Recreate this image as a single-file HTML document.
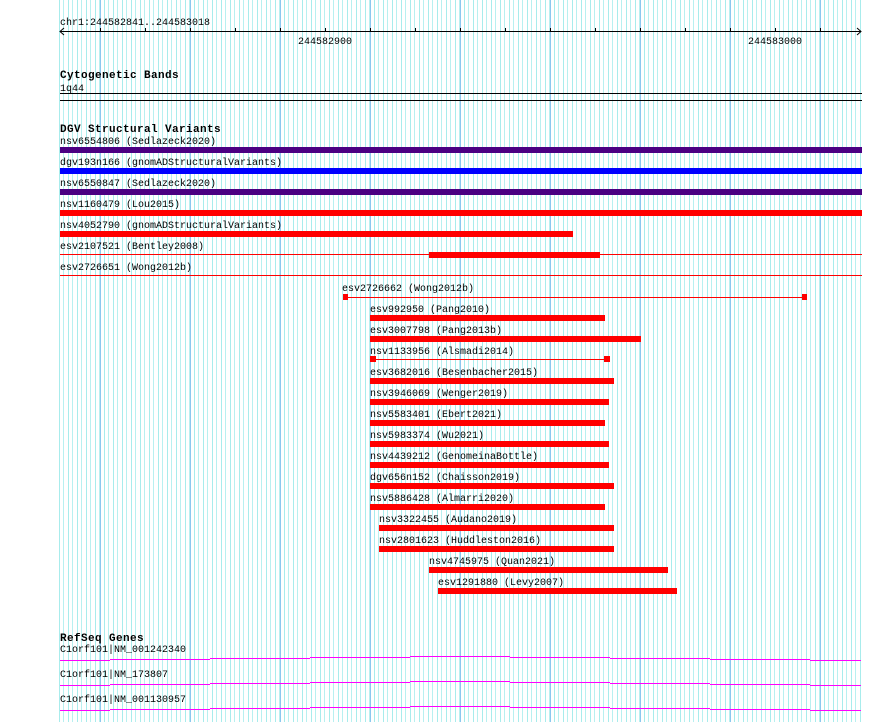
<!DOCTYPE html>
<html><head><meta charset="utf-8"><style>
html,body{margin:0;padding:0;background:#fff;width:890px;height:722px;overflow:hidden}
svg{display:block}
text{font-family:"Liberation Mono","DejaVu Sans Mono",monospace;font-size:10px;fill:#000}
.b{font-weight:bold;font-size:11px;letter-spacing:0.4px}
</style></head><body>
<svg width="890" height="722" viewBox="0 0 890 722" shape-rendering="crispEdges">
<defs>
<pattern id="lt" x="59" y="0" width="9" height="722" patternUnits="userSpaceOnUse">
<rect x="0" y="0" width="1" height="722" fill="#a8ecec"/>
<rect x="4" y="0" width="1" height="722" fill="#b8f0f0"/>
</pattern>
<pattern id="dk" x="100" y="0" width="90" height="722" patternUnits="userSpaceOnUse">
<rect x="0" y="0" width="1" height="722" fill="#8cc8ee"/>
</pattern>
</defs>
<rect x="59" y="0" width="802" height="722" fill="url(#lt)"/>
<rect x="100" y="0" width="761" height="722" fill="url(#dk)"/>

<!-- ruler -->
<text x="60" y="25">chr1:244582841..244583018</text>
<rect x="60" y="31" width="801" height="1" fill="#000"/>
<path d="M64 28 L60 31.5 L64 35 M857 28 L861 31.5 L857 35" stroke="#000" fill="none" shape-rendering="auto"/>
<g fill="#000">
<rect x="100" y="28" width="1" height="4"/><rect x="145" y="28" width="1" height="4"/><rect x="190" y="28" width="1" height="4"/><rect x="235" y="28" width="1" height="4"/><rect x="280" y="28" width="1" height="4"/><rect x="325" y="28" width="1" height="4"/><rect x="370" y="28" width="1" height="4"/><rect x="415" y="28" width="1" height="4"/><rect x="460" y="28" width="1" height="4"/><rect x="505" y="28" width="1" height="4"/><rect x="550" y="28" width="1" height="4"/><rect x="595" y="28" width="1" height="4"/><rect x="640" y="28" width="1" height="4"/><rect x="685" y="28" width="1" height="4"/><rect x="730" y="28" width="1" height="4"/><rect x="775" y="28" width="1" height="4"/><rect x="820" y="28" width="1" height="4"/>
</g>
<text x="298" y="44">244582900</text>
<text x="748" y="44">244583000</text>

<text class="b" x="60" y="78">Cytogenetic Bands</text>
<text x="60" y="91">1q44</text>
<rect x="60" y="93" width="802" height="1" fill="#000"/>
<rect x="60" y="100" width="802" height="1" fill="#000"/>

<text class="b" x="60" y="132">DGV Structural Variants</text>
<text x="60" y="144">nsv6554806 (Sedlazeck2020)</text>
<rect x="60" y="147" width="802" height="6" fill="#4b0082"/>
<text x="60" y="165">dgv193n166 (gnomADStructuralVariants)</text>
<rect x="60" y="168" width="802" height="6" fill="#0000ff"/>
<text x="60" y="186">nsv6550847 (Sedlazeck2020)</text>
<rect x="60" y="189" width="802" height="6" fill="#4b0082"/>
<text x="60" y="207">nsv1160479 (Lou2015)</text>
<rect x="60" y="210" width="802" height="6" fill="#ff0000"/>
<text x="60" y="228">nsv4052790 (gnomADStructuralVariants)</text>
<rect x="60" y="231" width="513" height="6" fill="#ff0000"/>
<text x="60" y="249">esv2107521 (Bentley2008)</text>
<rect x="60" y="254" width="802" height="1" fill="#ff0000"/>
<rect x="429" y="252" width="171" height="6" fill="#ff0000"/>
<text x="60" y="270">esv2726651 (Wong2012b)</text>
<rect x="60" y="275" width="802" height="1" fill="#ff0000"/>

<text x="342" y="291">esv2726662 (Wong2012b)</text>
<rect x="345" y="297" width="460" height="1" fill="#ff0000"/>
<rect x="343" y="294" width="5" height="6" fill="#ff0000"/>
<rect x="802" y="294" width="5" height="6" fill="#ff0000"/>

<text x="370" y="312">esv992950 (Pang2010)</text>
<rect x="370" y="315" width="235" height="6" fill="#ff0000"/>
<text x="370" y="333">esv3007798 (Pang2013b)</text>
<rect x="370" y="336" width="271" height="6" fill="#ff0000"/>
<text x="370" y="354">nsv1133956 (Alsmadi2014)</text>
<rect x="372" y="359" width="235" height="1" fill="#ff0000"/>
<rect x="370" y="356" width="6" height="6" fill="#ff0000"/>
<rect x="604" y="356" width="6" height="6" fill="#ff0000"/>
<text x="370" y="375">esv3682016 (Besenbacher2015)</text>
<rect x="370" y="378" width="244" height="6" fill="#ff0000"/>
<text x="370" y="396">nsv3946069 (Wenger2019)</text>
<rect x="370" y="399" width="239" height="6" fill="#ff0000"/>
<text x="370" y="417">nsv5583401 (Ebert2021)</text>
<rect x="370" y="420" width="235" height="6" fill="#ff0000"/>
<text x="370" y="438">nsv5983374 (Wu2021)</text>
<rect x="370" y="441" width="239" height="6" fill="#ff0000"/>
<text x="370" y="459">nsv4439212 (GenomeinaBottle)</text>
<rect x="370" y="462" width="239" height="6" fill="#ff0000"/>
<text x="370" y="480">dgv656n152 (Chaisson2019)</text>
<rect x="370" y="483" width="244" height="6" fill="#ff0000"/>
<text x="370" y="501">nsv5886428 (Almarri2020)</text>
<rect x="370" y="504" width="235" height="6" fill="#ff0000"/>
<text x="379" y="522">nsv3322455 (Audano2019)</text>
<rect x="379" y="525" width="235" height="6" fill="#ff0000"/>
<text x="379" y="543">nsv2801623 (Huddleston2016)</text>
<rect x="379" y="546" width="235" height="6" fill="#ff0000"/>
<text x="429" y="564">nsv4745975 (Quan2021)</text>
<rect x="429" y="567" width="239" height="6" fill="#ff0000"/>
<text x="438" y="585">esv1291880 (Levy2007)</text>
<rect x="438" y="588" width="239" height="6" fill="#ff0000"/>

<text class="b" x="60" y="641">RefSeq Genes</text>
<text x="60" y="652">C1orf101|NM_001242340</text>
<text x="60" y="677">C1orf101|NM_173807</text>
<text x="60" y="702">C1orf101|NM_001130957</text>
<g fill="#ff00ff" id="g1">
<rect x="60" y="660" width="50" height="1"/><rect x="110" y="659" width="100" height="1"/><rect x="210" y="658" width="100" height="1"/><rect x="310" y="657" width="100" height="1"/><rect x="410" y="656" width="100" height="1"/><rect x="510" y="657" width="100" height="1"/><rect x="610" y="658" width="100" height="1"/><rect x="710" y="659" width="100" height="1"/><rect x="810" y="660" width="51" height="1"/>
</g>
<use href="#g1" y="25"/>
<use href="#g1" y="50"/>
</svg>
</body></html>
